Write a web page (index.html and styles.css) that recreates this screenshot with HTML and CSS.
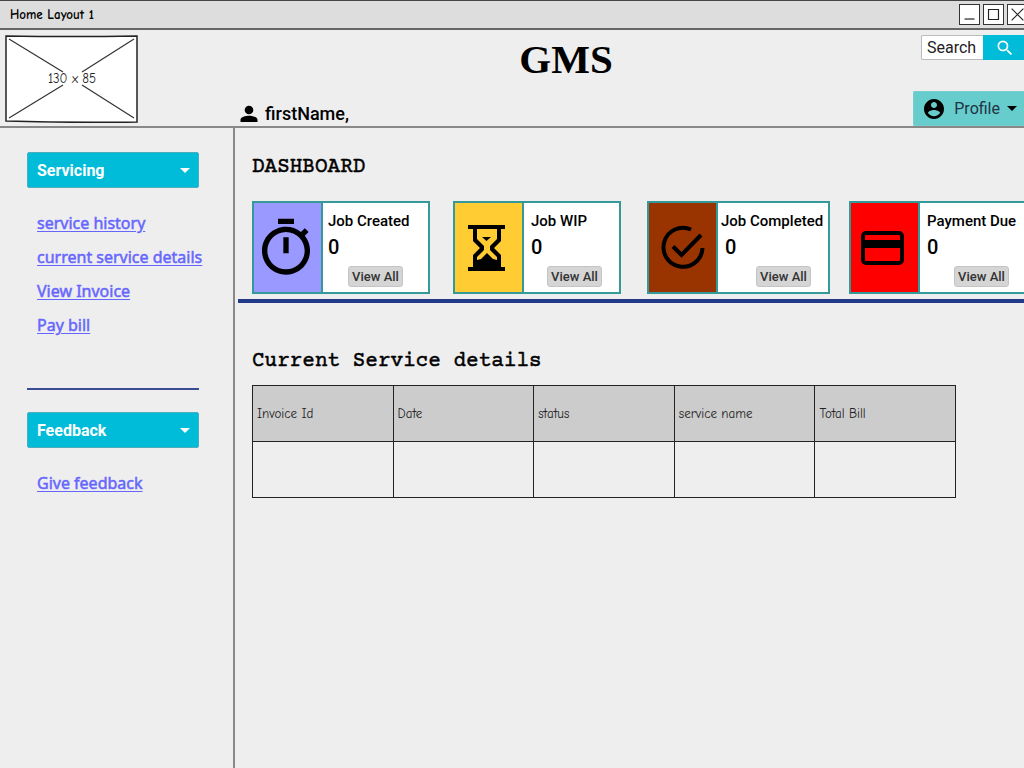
FILE: index.html
```html
<!DOCTYPE html>
<html lang="en">
<head>
<meta charset="utf-8">
<meta name="viewport" content="width=device-width, initial-scale=1">
<title>Home Layout 1</title>
<link rel="stylesheet" href="styles.css">
</head>
<body>
<div class="window">
  <div class="titlebar">
    <span class="titlebar-text">Home Layout 1</span>
    <div class="window-controls">
      <button class="window-button" type="button" aria-label="Minimize"><svg viewBox="0 0 21 21"><path d="M5 15.500h11"/></svg></button>
      <button class="window-button" type="button" aria-label="Maximize"><svg viewBox="0 0 21 21"><path d="M5 5h11v11H5z"/></svg></button>
      <button class="window-button" type="button" aria-label="Close"><svg viewBox="0 0 21 21"><path d="M4 4l13 13M17 4L4 17"/></svg></button>
    </div>
  </div>

  <header class="header">
    <svg class="logo" viewBox="0 0 133 88" role="img" aria-label="Logo placeholder">
      <path class="logo-frame" d="M1 1Q66 2 132 1L132 87Q66 88 1 86Z"/>
      <path class="logo-cross" d="M4 4L58 37M129 4L77 37M4 83L58 50M129 83L77 50"/>
      <text class="logo-text" x="67" y="48">130 x 85</text>
    </svg>
    <div class="header-center">
      <h1 class="brand">GMS</h1>
      <div class="user">
        <svg class="user-icon" viewBox="0 0 18 18"><circle cx="9" cy="5" r="4.3"/><path d="M.5 17v-2.2C.5 12 5.500 10.700 9 10.700s8.500 1.300 8.500 4.100V17z"/></svg>
        <span>firstName,</span>
      </div>
    </div>
    <div class="header-side">
      <form class="search">
        <input class="search-input" type="text" placeholder="Search" aria-label="Search">
        <button class="search-button" type="button" aria-label="Submit search"><svg viewBox="0 0 24 24"><path d="M15.500 14h-.79l-.28-.27A6.470 6.470 0 0 0 16 9.500 6.500 6.500 0 1 0 9.500 16c1.610 0 3.090-.59 4.230-1.570l.27.28v.79l5 4.990L20.490 19zm-6 0C7.010 14 5 11.990 5 9.500S7.010 5 9.500 5 14 7.010 14 9.500 11.990 14 9.500 14z"/></svg></button>
      </form>
      <button class="profile" type="button">
        <svg class="profile-icon" viewBox="2 2 20 20"><path d="M12 2C6.480 2 2 6.480 2 12s4.480 10 10 10 10-4.480 10-10S17.520 2 12 2zm0 3c1.660 0 3 1.340 3 3s-1.340 3-3 3-3-1.340-3-3 1.340-3 3-3zm0 14.200c-2.500 0-4.710-1.280-6-3.220.03-1.990 4-3.080 6-3.080 1.990 0 5.970 1.090 6 3.080-1.290 1.940-3.500 3.220-6 3.220z"/></svg>
        <span>Profile</span>
        <span class="caret"></span>
      </button>
    </div>
  </header>

  <div class="content">
    <nav class="sidebar">
      <section class="menu">
        <button class="menu-toggle" type="button" aria-expanded="true">Servicing <span class="caret"></span></button>
        <ul class="menu-links">
          <li><a href="#history">service history</a></li>
          <li><a href="#details">current service details</a></li>
          <li><a href="#invoice">View Invoice</a></li>
          <li><a href="#pay">Pay bill</a></li>
        </ul>
      </section>
      <hr class="menu-rule">
      <section class="menu">
        <button class="menu-toggle" type="button" aria-expanded="true">Feedback <span class="caret"></span></button>
        <ul class="menu-links">
          <li><a href="#feedback">Give feedback</a></li>
        </ul>
      </section>
    </nav>

    <main class="main">
      <h2 class="heading">DASHBOARD</h2>
      <div class="cards">
        <article class="card card-created">
          <div class="card-icon"><svg viewBox="0 0 24 24"><path d="M15 1H9v2h6V1zm-4 13h2V8h-2v6zm8.030-6.610 1.420-1.420c-.43-.51-.9-.99-1.410-1.410l-1.420 1.420A8.962 8.962 0 0 0 12 4c-4.970 0-9 4.030-9 9s4.020 9 9 9a8.994 8.994 0 0 0 7.030-14.610zM12 20c-3.870 0-7-3.130-7-7s3.130-7 7-7 7 3.130 7 7-3.130 7-7 7z"/></svg></div>
          <div class="card-body"><h3 class="card-title">Job Created</h3><p class="card-count">0</p><button class="view-all" type="button">View All</button></div>
        </article>
        <article class="card card-wip">
          <div class="card-icon"><svg viewBox="0 0 56 56"><path fill-rule="evenodd" d="M9 5h37v4H42v12l-7 7 7 7v12h4v4H9v-4h5V35l7-7-7-7V9H9zM18 9v10l7 7v4l-7 7v3l4-1 6-6 6 6 4 1v-3l-7-7v-4l7-7V9z"/><path d="M23 17h9l-4.500 4z"/></svg></div>
          <div class="card-body"><h3 class="card-title">Job WIP</h3><p class="card-count">0</p><button class="view-all" type="button">View All</button></div>
        </article>
        <article class="card card-completed">
          <div class="card-icon"><svg viewBox="0 0 56 56"><path class="stroke" d="M36 9.500A19.500 19.500 0 1 0 47.500 28M18 26.500L26.500 35 46 15"/></svg></div>
          <div class="card-body"><h3 class="card-title">Job Completed</h3><p class="card-count">0</p><button class="view-all" type="button">View All</button></div>
        </article>
        <article class="card card-due">
          <div class="card-icon"><svg viewBox="0 0 56 56"><rect class="stroke" x="8" y="13" width="39" height="30" rx="3"/><path d="M7 20h41v8H7z"/></svg></div>
          <div class="card-body"><h3 class="card-title">Payment Due</h3><p class="card-count">0</p><button class="view-all" type="button">View All</button></div>
        </article>
      </div>
      <hr class="main-rule">
      <h2 class="heading heading-details">Current Service details</h2>
      <table class="details">
        <thead>
          <tr><th scope="col">Invoice Id</th><th scope="col">Date</th><th scope="col">status</th><th scope="col">service name</th><th scope="col">Total Bill</th></tr>
        </thead>
        <tbody>
          <tr><td></td><td></td><td></td><td></td><td></td></tr>
        </tbody>
      </table>
    </main>
  </div>
</div>
</body>
</html>
```
FILE: styles.css
```css
* { box-sizing: border-box; }
body { margin: 0; background: #eee; color: #000; font-family: Roboto, sans-serif; }
button, input { font: inherit; color: inherit; }
button { padding: 0; cursor: pointer; }
h1, h2, h3, p, ul { margin: 0; padding: 0; }

.window { display: flex; flex-direction: column; min-height: 100vh; overflow: hidden; }

.titlebar {
  display: flex; align-items: center; justify-content: space-between;
  height: 30px; padding-left: 10px;
  background: #ddd; border-top: 1px solid #444; border-bottom: 2px solid #666;
}
.titlebar-text { font: 700 13px/16px "Comic Neue", "Comic Sans MS", Lato, sans-serif; }
.window-controls { display: flex; gap: 3px; margin-right: -4px; }
.window-button { width: 21px; height: 21px; background: #fff; border: 1px solid #333; }
.window-button svg { display: block; width: 19px; height: 19px; fill: none; stroke: #222; stroke-width: 1.3; }

.header {
  display: grid; grid-template-columns: 240px 1fr 132px;
  height: 98px; border-bottom: 2px solid #888;
}
.logo { width: 133px; height: 88px; margin: 5px; }
.logo-frame { fill: #fff; stroke: #222; stroke-width: 1.5; }
.logo-cross { fill: none; stroke: #333; stroke-width: 1.2; }
.logo-text { font: 13px "Comic Neue", "Comic Sans MS", "Open Sans", sans-serif; text-anchor: middle; fill: #222; }
.header-center { display: flex; flex-direction: column; justify-content: space-between; padding: 5px 0 2px; }
.brand { font: 700 41px/48px "Liberation Serif", serif; text-align: center; }
.user { display: flex; align-items: center; gap: 7px; font-size: 18px; font-weight: 500; line-height: 24px; }
.user-icon { width: 18px; height: 18px; }
.header-side { display: flex; flex-direction: column; align-items: flex-end; justify-content: space-between; padding: 5px 0 2px; }
.search { display: flex; height: 25px; }
.search-input { width: 62px; padding: 0 4px 0 5px; border: 1px solid #bbb; border-right: 0; border-radius: 2px 0 0 2px; background: #fff; font-size: 16px; }
.search-input::placeholder { color: #222; opacity: 1; }
.search-button { display: grid; place-items: center; width: 41px; padding-left: 2px; border: 0; background: #00bcd8; }
.search-button svg { width: 20px; height: 20px; fill: #fff; }
.profile {
  display: flex; align-items: center; height: 35px; padding: 0 7px 0 10px;
  background: #6cc; border: 1px solid #7cc; border-right: 0; border-radius: 2px 0 0 2px;
  font-size: 16px; color: #234;
}
.profile-icon { width: 20px; height: 20px; margin-right: 10px; fill: #000; }
.profile .caret { margin-left: 7px; color: #000; }
.caret { border: 5px solid transparent; border-top-color: currentColor; border-bottom: 0; }

.content { display: flex; flex: 1; }
.sidebar { flex: none; width: 235px; padding: 24px 34px 24px 27px; border-right: 2px solid #888; }
.menu-toggle {
  display: flex; align-items: center; justify-content: space-between;
  width: 172px; height: 36px; padding: 0 8px 0 9px;
  background: #00bcd8; border: 1px solid #4aaebd; border-radius: 2px;
  color: #fff; font-size: 16px; font-weight: 700;
}
.menu-links { list-style: none; padding: 18px 0 0 10px; }
.menu-links li { height: 34px; font: 400 16px/34px "Noto Sans", sans-serif; white-space: nowrap; }
.menu-links a { color: #66f; text-underline-offset: 2px; -webkit-text-stroke: 0.5px #66f; }
.menu-rule { width: 172px; height: 2px; margin: 46px 0 22px; border: 0; background: #3a4c92; }

.main { flex: 1; min-width: 0; padding-left: 3px; }
.heading {
  padding: 28px 0 0 14px;
  font: 400 21px/24px "Courier Prime", "Nimbus Mono PS", FreeMono, "Liberation Mono", monospace;
  -webkit-text-stroke: 0.5px #000;
}
.heading-details { padding-top: 47px; }
.cards { display: grid; grid-template-columns: 201px 194px 202px 179px; padding: 21px 0 0 14px; }
.card { display: flex; height: 93px; background: #fff; border: 2px solid #399; }
.card-icon { display: grid; place-items: center; flex: none; width: 69px; padding-right: 4px; border-right: 2px solid #399; }
.card-icon svg { width: 56px; height: 56px; }
.card-icon .stroke { fill: none; stroke: #000; stroke-width: 4; }
.card-body { display: flex; flex: 1; flex-direction: column; padding: 7px 0 5px 7px; white-space: nowrap; }
.card-title { font-size: 15px; font-weight: 500; line-height: 22px; }
.card-count { padding-top: 3px; font-size: 20px; font-weight: 500; line-height: 24px; }
.view-all {
  align-self: flex-end; width: 55px; height: 21px; margin: auto 17px 0 0;
  background: #d5d5d5; border: 1px solid #c4c4c4; border-radius: 3px;
  font-size: 13px; font-weight: 500; line-height: 19px; color: #333;
}
.card-created { width: 178px; }
.card-created .card-icon { background: #99f; }
.card-created .card-body { padding-left: 5px; }
.card-created .view-all { margin-right: 25px; }
.card-created svg { width: 64px; height: 64px; }
.card-wip { width: 168px; }
.card-wip .card-icon { background: #fc3; }
.card-completed { width: 183px; }
.card-completed .card-icon { padding-right: 0; background: #930; }
.card-completed .card-body { padding-left: 3px; }
.card-completed .card-count { padding-left: 4px; }
.card-due .card-icon { background: #f00; }
.main-rule { height: 4px; margin: 5px 0 0; border: 0; background: #223a88; }

.details { width: 704px; margin: 11px 0 0 14px; border-collapse: collapse; table-layout: fixed; }
.details th, .details td { height: 56px; padding: 0 4px; border: 1px solid #222; }
.details th {
  background: #ccc; text-align: left; color: #222;
  font: 400 13px/16px "Comic Neue", "Comic Sans MS", "Open Sans", sans-serif;
}
```
